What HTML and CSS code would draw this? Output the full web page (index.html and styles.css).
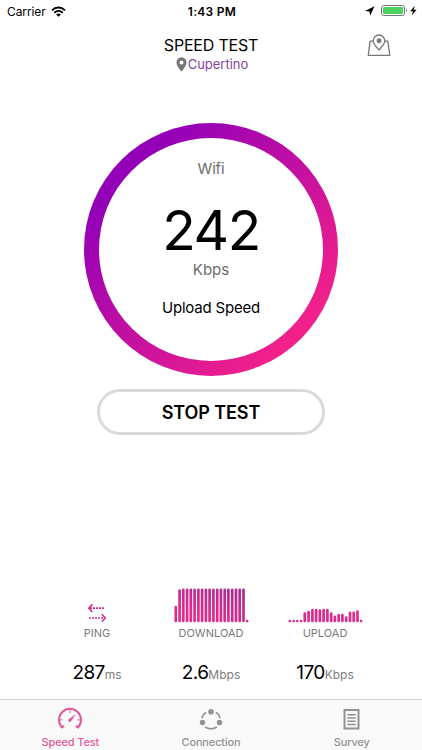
FILE: index.html
```html
<!DOCTYPE html>
<html lang="en">

<head>
  <meta charset="UTF-8">
  <meta name="viewport" content="width=device-width, initial-scale=1.0">
  <title>Speed Test</title>
  <link rel="stylesheet" href="styles.css">
</head>

<body>
  <div class="status-bar">
    <div class="carrier">
      <span>Carrier</span>
      <svg width="15" height="11" viewBox="0 0 15 11">
        <path d="M1 4.3C4.7 .6 10.3 .6 14 4.3M3.3 6.7C5.8 4.3 9.2 4.3 11.7 6.7" fill="none" stroke="#000" stroke-width="1.9" />
        <path d="M5.1 8.4Q7.5 6.4 9.9 8.4L7.5 10.8z" />
      </svg>
    </div>
    <span class="time">1:43 PM</span>
    <svg class="power" width="54" height="14" viewBox="0 0 54 14">
      <path d="M2 7L11.5 2.3L7.1 11.7L6.5 7.6z" />
      <rect x="18.5" y="1.5" width="23" height="10" rx="2.3" fill="#fff" stroke="#777" />
      <rect x="20" y="3" width="20" height="7" rx="1" fill="#4cd35f" />
      <path d="M43 4.8Q45 6.5 43 8.2z" fill="#777" />
      <path d="M51.8 1.7L47.2 7.3H50L48.7 11.5L53.6 5.8H50.7z" />
    </svg>
  </div>

  <header>
    <div class="heading">
      <h1>SPEED TEST</h1>
      <div class="location">
        <svg width="11" height="15" viewBox="0 0 11 15">
          <path fill="#777" fill-rule="evenodd" d="M5.5 .3A5 5 0 0 0 .5 5.4C.5 9.2 5.5 14.5 5.5 14.5S10.5 9.2 10.5 5.4A5 5 0 0 0 5.5 .3M5.5 3.4A2 2 0 1 1 5.5 7.4A2 2 0 1 1 5.5 3.4" />
        </svg>
        <span>Cupertino</span>
      </div>
    </div>
    <svg class="map-icon" width="24" height="24" viewBox="0 0 24 24" fill="none" stroke="#777" stroke-width="1.3" stroke-linejoin="round">
      <path d="M6.2 7.2H3.2L1.2 21.3H22.8L20.8 7.2H17.8" />
      <path d="M12 15.9C9.5 13.2 6.2 10.4 6.2 6.8A5.8 5.8 0 0 1 17.8 6.8C17.8 10.4 14.5 13.2 12 15.9z" />
      <circle cx="12" cy="6.8" r="1.8" fill="#777" />
    </svg>
  </header>

  <main>
    <div class="gauge">
      <div class="gauge-inner">
        <span class="network">Wifi</span>
        <span class="speed">242</span>
        <span class="unit">Kbps</span>
        <span class="direction">Upload Speed</span>
      </div>
    </div>
    <button class="stop-button">STOP TEST</button>
  </main>

  <section class="stats">
    <div class="stat ping">
      <svg width="20" height="35" viewBox="0 0 20 35" fill="none" stroke="#d92b93" stroke-width="1.6">
        <path d="M5.3 16.4L1.8 20.2L5.3 24M14.7 26.2L18.3 30L14.7 33.8" />
        <path d="M3 20.2H18M2 30H17" stroke-width="1.7" stroke-dasharray="2 1" />
      </svg>
      <span class="label">PING</span>
      <div class="value"><b>287</b><small>ms</small></div>
    </div>
    <div class="stat download">
      <svg width="75" height="35" viewBox="0 0 75 35" stroke-width="2.7" stroke-linecap="round">
        <defs>
          <linearGradient id="bars" gradientUnits="userSpaceOnUse" x1="60" y1="0" x2="48" y2="35">
            <stop offset="0" stop-color="#a72c92" />
            <stop offset="1" stop-color="#e42a8d" />
          </linearGradient>
        </defs>
        <path stroke="url(#bars)" d="M1.8 19V33M5.6 2.5V33M9.3 1.8V33M13.1 1.8V33M16.8 1.8V33M20.6 1.8V33M24.4 1.8V33M28.1 1.8V33M31.9 1.8V33M35.6 1.8V33M39.4 1.8V33M43.2 1.8V33M46.9 1.8V33M50.7 1.8V33M54.4 1.8V33M58.2 1.8V33M62 1.8V33M65.7 1.8V33M69.5 1.8V33M73.2 33V33.1" />
      </svg>
      <span class="label">DOWNLOAD</span>
      <div class="value"><b>2.6</b><small>Mbps</small></div>
    </div>
    <div class="stat upload">
      <svg width="75" height="35" viewBox="0 0 75 35" stroke="#dc2c8d" stroke-width="2.7" stroke-linecap="round">
        <path d="M1.8 33V33.1M5.6 33V33.1M9.3 33V33.1M13.1 33V33.1M16.8 25.5V33M20.6 24V33M24.4 22V33M28.1 22V33M31.9 22.6V33M35.6 22.2V33M39.4 22V33M43.2 25.5V33M46.9 28.8V33M50.7 27.2V33M54.4 27V33M58.2 29.5V33M62 24.8V33M65.7 24.8V33M69.5 23.5V33M73.2 33V33.1" />
      </svg>
      <span class="label">UPLOAD</span>
      <div class="value"><b>170</b><small>Kbps</small></div>
    </div>
  </section>

  <nav>
    <a class="tab active">
      <svg width="26" height="24" viewBox="0 0 26 24" fill="none" stroke="currentColor">
        <path d="M4.8 20.2A11 11 0 1 1 21.2 20.2" stroke-width="2" />
        <path d="M4.2 20.8L7.2 18.8M21.8 20.8L18.8 18.8" stroke-width="2" />
        <path d="M13 3V6M3 12.9H5.5M20.5 12.9H23" stroke-width="1" />
        <path d="M11.6 12.3L19 7.2L13.8 14.6A1.6 1.6 0 0 1 11.6 12.3z" fill="currentColor" stroke="none" />
      </svg>
      <span>Speed Test</span>
    </a>
    <a class="tab">
      <svg width="26" height="24" viewBox="0 0 26 24" fill="currentColor">
        <circle cx="13" cy="4.8" r="2.8" />
        <circle cx="4.5" cy="15.5" r="2.7" />
        <circle cx="21.5" cy="15.5" r="2.7" />
        <path d="M3.9 11.1Q4.8 7.2 8.2 5.4M17.8 5.4Q21.2 7.2 22.1 11.1M7.2 20Q13 23.5 18.8 20" fill="none" stroke="currentColor" stroke-width="1.5" />
      </svg>
      <span>Connection</span>
    </a>
    <a class="tab">
      <svg width="26" height="24" viewBox="0 0 26 24" fill="none" stroke="currentColor">
        <rect x="5.5" y="3" width="14" height="18.5" stroke-width="2" />
        <path d="M8.3 7.7H16.8M8.3 11H16.8M8.3 14.2H16.8M8.3 17.5H16.8" stroke-width="1.5" />
      </svg>
      <span>Survey</span>
    </a>
  </nav>
</body>

</html>
```
FILE: styles.css
```css
* {
  box-sizing: border-box;
}

body {
  margin: 0;
  height: 750px;
  display: flex;
  flex-direction: column;
  background-color: white;
  color: black;
  font-family: Inter, "Liberation Sans", sans-serif;
  overflow: hidden;
}

svg {
  display: block;
  flex: none;
}

/* Status bar */

.status-bar {
  display: grid;
  grid-template-columns: 1fr auto 1fr;
  align-items: center;
  height: 22px;
  padding: 0 5px 0 7px;
  font-size: 12px;
}

.carrier {
  display: flex;
  align-items: center;
  gap: 5px;
  letter-spacing: -0.1px;
}

.time {
  font-weight: 600;
  letter-spacing: 0.3px;
}

.power {
  justify-self: end;
}

/* Header */

header {
  display: grid;
  grid-template-columns: 1fr auto 1fr;
  height: 101px;
  padding-top: 12px;
}

.heading {
  grid-column: 2;
}

h1 {
  margin: 0;
  font-size: 16px;
  font-weight: 400;
  letter-spacing: -0.2px;
  line-height: 23px;
}

.location {
  display: flex;
  justify-content: center;
  align-items: center;
  gap: 1px;
  height: 14px;
  padding-left: 2px;
  color: #84449c;
  font-size: 13px;
}

.map-icon {
  justify-self: end;
  margin-right: 31px;
}

/* Gauge */

main {
  display: flex;
  flex-direction: column;
  align-items: center;
}

.gauge {
  flex: none;
  width: 254px;
  height: 253px;
  padding: 15px;
  border-radius: 50%;
  background: linear-gradient(135deg, #9400b8 19%, #f2208a 83%);
}

.gauge-inner {
  display: flex;
  flex-direction: column;
  align-items: center;
  height: 223px;
  padding-top: 21px;
  border-radius: 50%;
  background-color: white;
}

.network,
.unit {
  color: #6c6c6c;
  font-size: 15px;
  line-height: 20px;
}

.network {
  letter-spacing: -0.2px;
}

.speed {
  margin-top: 22px;
  font-size: 55px;
  letter-spacing: -1.4px;
  line-height: 58px;
}

.unit {
  margin-top: 1px;
}

.direction {
  margin-top: 18px;
  font-size: 15px;
  letter-spacing: -0.2px;
  line-height: 20px;
}

.stop-button {
  width: 228px;
  height: 46px;
  margin-top: 13px;
  border: 3px solid #dcd8d9;
  border-radius: 23px;
  background-color: white;
  color: black;
  font-family: inherit;
  font-size: 18px;
  font-weight: 600;
  letter-spacing: -0.1px;
}

/* Results */

.stats {
  display: flex;
  justify-content: center;
  margin-top: 153px;
}

.stat {
  display: flex;
  flex-direction: column;
  align-items: center;
  width: 114px;
}

.label {
  margin-top: 3px;
  color: #7a7a7a;
  font-size: 11px;
  line-height: 14px;
}

.value {
  margin-top: 22px;
  line-height: 22px;
  white-space: nowrap;
}

.value b {
  font-size: 19px;
  font-weight: 400;
  letter-spacing: -0.6px;
}

.value small {
  color: #7c7c7c;
  font-size: 12px;
}

/* Tab bar */

nav {
  flex: none;
  display: flex;
  height: 51px;
  margin-top: auto;
  border-top: 1px solid #d4d4d4;
  background-color: #f9f9f9;
}

.tab {
  flex: 1;
  display: flex;
  flex-direction: column;
  align-items: center;
  gap: 5px;
  padding-top: 7px;
  color: #929292;
  font-size: 11px;
  font-weight: 500;
  letter-spacing: -0.15px;
  line-height: 13px;
}

.active {
  color: #e0599c;
}
```
